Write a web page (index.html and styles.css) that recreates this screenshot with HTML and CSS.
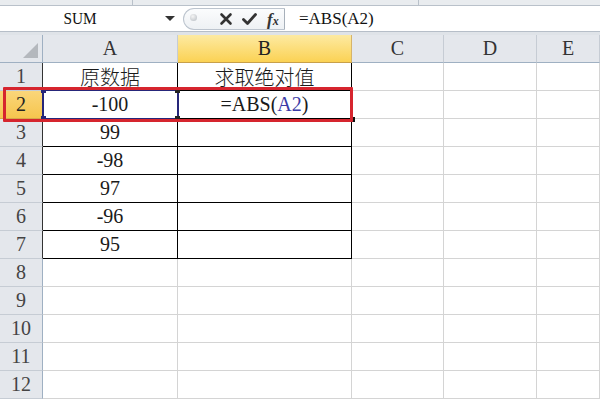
FILE: index.html
```html
<!DOCTYPE html>
<html>
<head>
<meta charset="utf-8">
<link rel="stylesheet" href="styles.css">
</head>
<body>
<div class="page">
  <div class="strip">
    <div class="seg s1"></div>
    <div class="seg s2"></div>
    <div class="seg s3"></div>
  </div>
  <div class="fbar">
    <div class="namebox">
      <span class="name">SUM</span>
      <span class="arrow"></span>
    </div>
    <div class="pill">
      <span class="grip"></span>
      <svg class="ico x" width="14" height="14" viewBox="0 0 14 14"><path d="M2.5 2.5 L11.5 11.5 M11.5 2.5 L2.5 11.5" stroke="#333" stroke-width="2.6" stroke-linecap="round"/></svg>
      <svg class="ico ck" width="15" height="14" viewBox="0 0 15 14"><path d="M1.5 7.5 L5.5 11.5 L13.5 2.5" stroke="#333" stroke-width="2.8" fill="none" stroke-linejoin="round" stroke-linecap="round"/></svg>
      <span class="fx"><i>f</i><span class="fxs">x</span></span>
    </div>
    <div class="input">=ABS(A2)</div>
  </div>
  <div class="gap"></div>
  <div class="sheet">
    <div class="hd corner"><span class="tri"></span></div>
    <div class="hd col">A</div>
    <div class="hd col sel">B</div>
    <div class="hd col">C</div>
    <div class="hd col">D</div>
    <div class="hd col">E</div>

    <div class="rh tb">1</div><div class="c t">原数据</div><div class="c t">求取绝对值</div><div class="c"></div><div class="c"></div><div class="c"></div>
    <div class="rh tb sel">2</div><div class="c t">-100</div><div class="c t">=ABS(<span class="ref">A2</span>)</div><div class="c"></div><div class="c"></div><div class="c"></div>
    <div class="rh tb">3</div><div class="c t">99</div><div class="c t"></div><div class="c"></div><div class="c"></div><div class="c"></div>
    <div class="rh tb">4</div><div class="c t">-98</div><div class="c t"></div><div class="c"></div><div class="c"></div><div class="c"></div>
    <div class="rh tb">5</div><div class="c t">97</div><div class="c t"></div><div class="c"></div><div class="c"></div><div class="c"></div>
    <div class="rh tb">6</div><div class="c t">-96</div><div class="c t"></div><div class="c"></div><div class="c"></div><div class="c"></div>
    <div class="rh tb">7</div><div class="c t">95</div><div class="c t"></div><div class="c"></div><div class="c"></div><div class="c"></div>
    <div class="rh">8</div><div class="c"></div><div class="c"></div><div class="c"></div><div class="c"></div><div class="c"></div>
    <div class="rh">9</div><div class="c"></div><div class="c"></div><div class="c"></div><div class="c"></div><div class="c"></div>
    <div class="rh">10</div><div class="c"></div><div class="c"></div><div class="c"></div><div class="c"></div><div class="c"></div>
    <div class="rh">11</div><div class="c"></div><div class="c"></div><div class="c"></div><div class="c"></div><div class="c"></div>
    <div class="rh">12</div><div class="c"></div><div class="c"></div><div class="c"></div><div class="c"></div><div class="c"></div>
  </div>

  <div class="active">
    <span class="h h1"></span><span class="h h2"></span><span class="h h3"></span><span class="h h4"></span>
  </div>
  <span class="dot"></span>
  <div class="redbox"></div>
</div>
</body>
</html>
```

FILE: styles.css
```css
* { box-sizing: border-box; }
html, body { margin: 0; padding: 0; }
body {
  width: 600px;
  height: 400px;
  overflow: hidden;
  background: #fff;
  font-family: "Liberation Serif", "Noto Sans CJK SC", serif;
}
.page {
  position: relative;
  width: 600px;
  height: 400px;
  overflow: hidden;
}
.strip {
  display: flex;
  height: 6px;
  background: #e9ecef;
  border-bottom: 1px solid #b9c1ca;
}
.seg { height: 100%; border-right: 1px solid #b9c1ca; }
.s1 { width: 133px; }
.s2 { width: 286px; }
.s3 { flex: 1; border-right: none; }

.fbar {
  display: flex;
  height: 26px;
  background: #fff;
  border-bottom: 1px solid #b6bec8;
}
.namebox {
  width: 181px;
  display: flex;
  align-items: center;
}
.name {
  width: 160px;
  text-align: center;
  font-size: 17px;
  color: #111;
  font-family: "Liberation Serif", serif;
  transform: scaleX(0.9);
}
.arrow {
  width: 0; height: 0;
  margin-left: 5px;
  border-left: 5px solid transparent;
  border-right: 5px solid transparent;
  border-top: 5px solid #333;
}
.pill {
  width: 102px;
  display: flex;
  align-items: center;
  margin: 2px 0 1px 2px;
  border: 1px solid #bcc4ce;
  border-right: 1px solid #a7b0ba;
  border-radius: 12px 0 0 12px;
  background: linear-gradient(#fbfcfd, #eef1f4);
  padding-left: 6px;
}
.grip {
  width: 7px; height: 7px;
  border-radius: 50%;
  background: radial-gradient(circle at 40% 35%, #f5f5f5, #b5bbc1);
  margin-right: 22px;
  margin-top: -3px;
}
.ico { display: block; }
.x { margin-right: 9px; }
.ck { margin-right: 10px; }
.fx {
  font-family: "Liberation Serif", serif;
  font-size: 17px;
  font-weight: bold;
  color: #333;
  line-height: 1;
}
.fx i { font-style: italic; }
.fxs { font-size: 12px; font-style: italic; }
.input {
  flex: 1;
  display: flex;
  align-items: center;
  padding-left: 14px;
  font-size: 17px;
  color: #111;
}
.gap {
  height: 3px;
  background: #dfe3e8;
}

.sheet {
  display: grid;
  grid-template-columns: 43px 135px 174px 92px 93px 63px;
  grid-template-rows: 28px repeat(12, 28px);
}
.hd, .rh, .c {
  border-right: 1px solid #d4d4d4;
  border-bottom: 1px solid #d4d4d4;
  display: flex;
  align-items: center;
  justify-content: center;
  font-size: 20px;
  white-space: nowrap;
  font-weight: 300;
}
.hd {
  background: #e4e7ec;
  border-right-color: #c6ccd4;
  border-bottom-color: #9fb0c2;
  color: #333;
}
.corner { position: relative; border-right-color: #9fb0c2; }
.tri {
  position: absolute;
  right: 4px; bottom: 4px;
  width: 0; height: 0;
  border-left: 15px solid transparent;
  border-bottom: 15px solid #b4b8bd;
}
.hd.sel {
  background: linear-gradient(#fdeaa2, #fbd254);
  border-bottom-color: #c8a04a;
  border-right-color: #d6b46a;
  color: #222;
}
.rh {
  background: #e4e7ec;
  border-right-color: #9fb0c2;
  border-bottom-color: #c6ccd4;
  color: #444;
}
.rh.tb { border-right-color: #333; }
.rh.sel {
  background: linear-gradient(#fad67a, #f6c54e);
  border-bottom-color: #d6a84a;
  color: #222;
}
.c { color: #1a1a1a; }
.c.t {
  border-right-color: #000;
  border-bottom-color: #000;
}
.ref { color: #3b3ba6; }

.active {
  position: absolute;
  left: 42px; top: 89px;
  width: 137px; height: 31px;
  border: 2px solid #26267a;
}
.h {
  position: absolute;
  width: 5px; height: 5px;
  background: #26267a;
}
.h1 { left: -3px; top: -3px; }
.h2 { left: -3px; bottom: -3px; }
.h3 { right: -3px; top: -3px; background: #222; }
.h4 { right: -3px; bottom: -3px; background: #222; }
.dot {
  position: absolute;
  left: 351px; top: 117px;
  width: 4px; height: 5px;
  background: #111;
}
.redbox {
  position: absolute;
  left: 3px; top: 87px;
  width: 350px; height: 35px;
  border: 3px solid #d6252e;
  border-radius: 1px;
}
```
